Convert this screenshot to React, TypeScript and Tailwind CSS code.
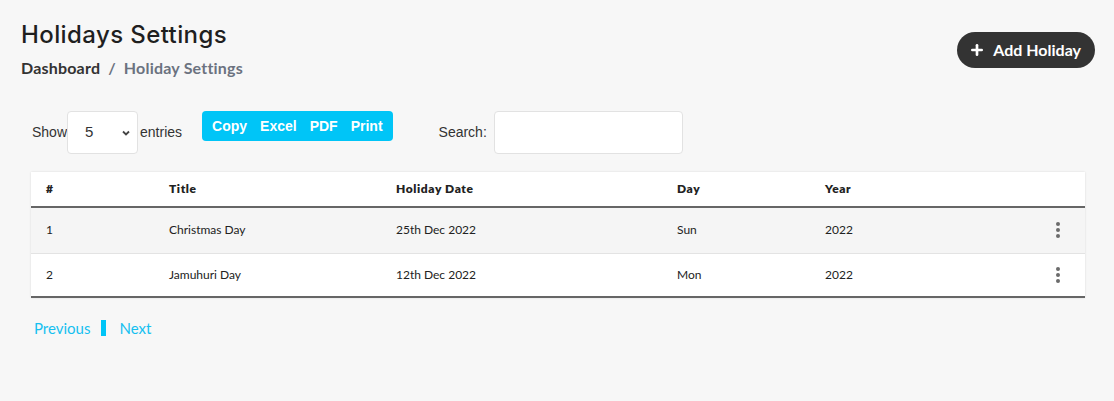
import { Plus } from "lucide-react";

const rows = [
    { id: 1, title: "Christmas Day", date: "25th Dec 2022", day: "Sun", year: "2022" },
    { id: 2, title: "Jamuhuri Day", date: "12th Dec 2022", day: "Mon", year: "2022" },
];

function Dots() {
    return (
        <span className="flex flex-col items-center gap-[2px]">
            <span className="h-[4px] w-[4px] rounded-full bg-[#6b6b6b]" />
            <span className="h-[4px] w-[4px] rounded-full bg-[#6b6b6b]" />
            <span className="h-[4px] w-[4px] rounded-full bg-[#6b6b6b]" />
        </span>
    );
}

export default function App() {
    return (
        <div className="min-h-[401px] bg-[#f7f7f7] font-['Lato','Noto_Sans',sans-serif] text-[#222]">
            {/* Header */}
            <div className="flex items-start justify-between pl-[21px] pr-[19px] pt-[20px]">
                <div>
                    <h1 className="font-['Inter',sans-serif] text-[24px] font-medium leading-[30px] tracking-[0.4px] text-[#1f1f1f]">Holidays Settings</h1>
                    <div className="mt-[8px] flex items-center gap-[8px] text-[16px] font-bold leading-[20px] tracking-[0.2px]">
                        <span className="text-[#333]">Dashboard</span>
                        <span className="text-[#6b7280]">/</span>
                        <span className="text-[#6b7280]">Holiday Settings</span>
                    </div>
                </div>
                <button className="mt-[12px] flex h-[36px] items-center gap-[8px] rounded-full bg-[#333333] pl-[12px] pr-[14px] text-[16px] font-bold text-white">
                    <Plus className="h-[16px] w-[16px]" strokeWidth={4} />
                    Add Holiday
                </button>
            </div>

            {/* Controls */}
            <div className="mt-[33px] flex items-start pl-[32px] font-['Liberation_Sans',sans-serif] text-[14px] text-[#333]">
                <div className="flex items-center">
                    <span>Show</span>
                    <div className="flex h-[43px] w-[71px] items-center justify-between rounded-[4px] border border-[#e2e2e2] bg-white pl-[17px] pr-[6px] text-[15px]">
                        <span>5</span>
                        <svg width="10" height="10" viewBox="0 0 10 10" className="text-[#444]">
                            <path d="M2 3.5 L5 6.5 L8 3.5" fill="none" stroke="currentColor" strokeWidth="1.8" />
                        </svg>
                    </div>
                    <span className="ml-[2px]">entries</span>
                </div>
                <div className="ml-[20px] flex h-[30px] items-center gap-[13px] rounded-[4px] bg-[#00c5f7] px-[10px] font-bold text-white">
                    <span>Copy</span>
                    <span>Excel</span>
                    <span>PDF</span>
                    <span>Print</span>
                </div>
                <div className="ml-[46px] flex items-center gap-[7px]">
                    <span>Search:</span>
                    <div className="h-[43px] w-[189px] rounded-[4px] border border-[#e2e2e2] bg-white" />
                </div>
            </div>

            {/* Table */}
            <div className="ml-[31px] mr-[29px] mt-[18px] bg-white shadow-[0_0_2px_rgba(0,0,0,0.12)]">
                <table className="w-full border-collapse text-left text-[12px]">
                    <thead>
                        <tr className="h-[35px] border-b-2 border-[#666]">
                            <th className="w-[138px] pl-[15px] font-extrabold tracking-[0.6px]">#</th>
                            <th className="w-[227px] font-extrabold tracking-[0.6px]">Title</th>
                            <th className="w-[281px] font-extrabold tracking-[0.6px]">Holiday Date</th>
                            <th className="w-[148px] font-extrabold tracking-[0.6px]">Day</th>
                            <th className="font-extrabold tracking-[0.6px]">Year</th>
                            <th className="w-[60px]" />
                        </tr>
                    </thead>
                    <tbody>
                        {rows.map((r, i) => (
                            <tr
                                key={r.id}
                                className={
                                    i === 0
                                        ? "h-[46px] border-b border-[#e3e3e3] bg-[#f5f5f5]"
                                        : "h-[44px] border-b-2 border-[#666] bg-white"
                                }
                            >
                                <td className="pl-[15px]">{r.id}</td>
                                <td>{r.title}</td>
                                <td>{r.date}</td>
                                <td>{r.day}</td>
                                <td>{r.year}</td>
                                <td>
                                    <div className="flex justify-end pr-[25px]">
                                        <Dots />
                                    </div>
                                </td>
                            </tr>
                        ))}
                    </tbody>
                </table>
            </div>

            {/* Pagination */}
            <div className="mt-[19px] flex items-center pl-[34px] text-[15px] text-[#15c0f0]">
                <span>Previous</span>
                <span className="ml-[11px] h-[16px] w-[5px] bg-[#00c5f7]" />
                <span className="ml-[13px]">Next</span>
            </div>
        </div>
    );
}
